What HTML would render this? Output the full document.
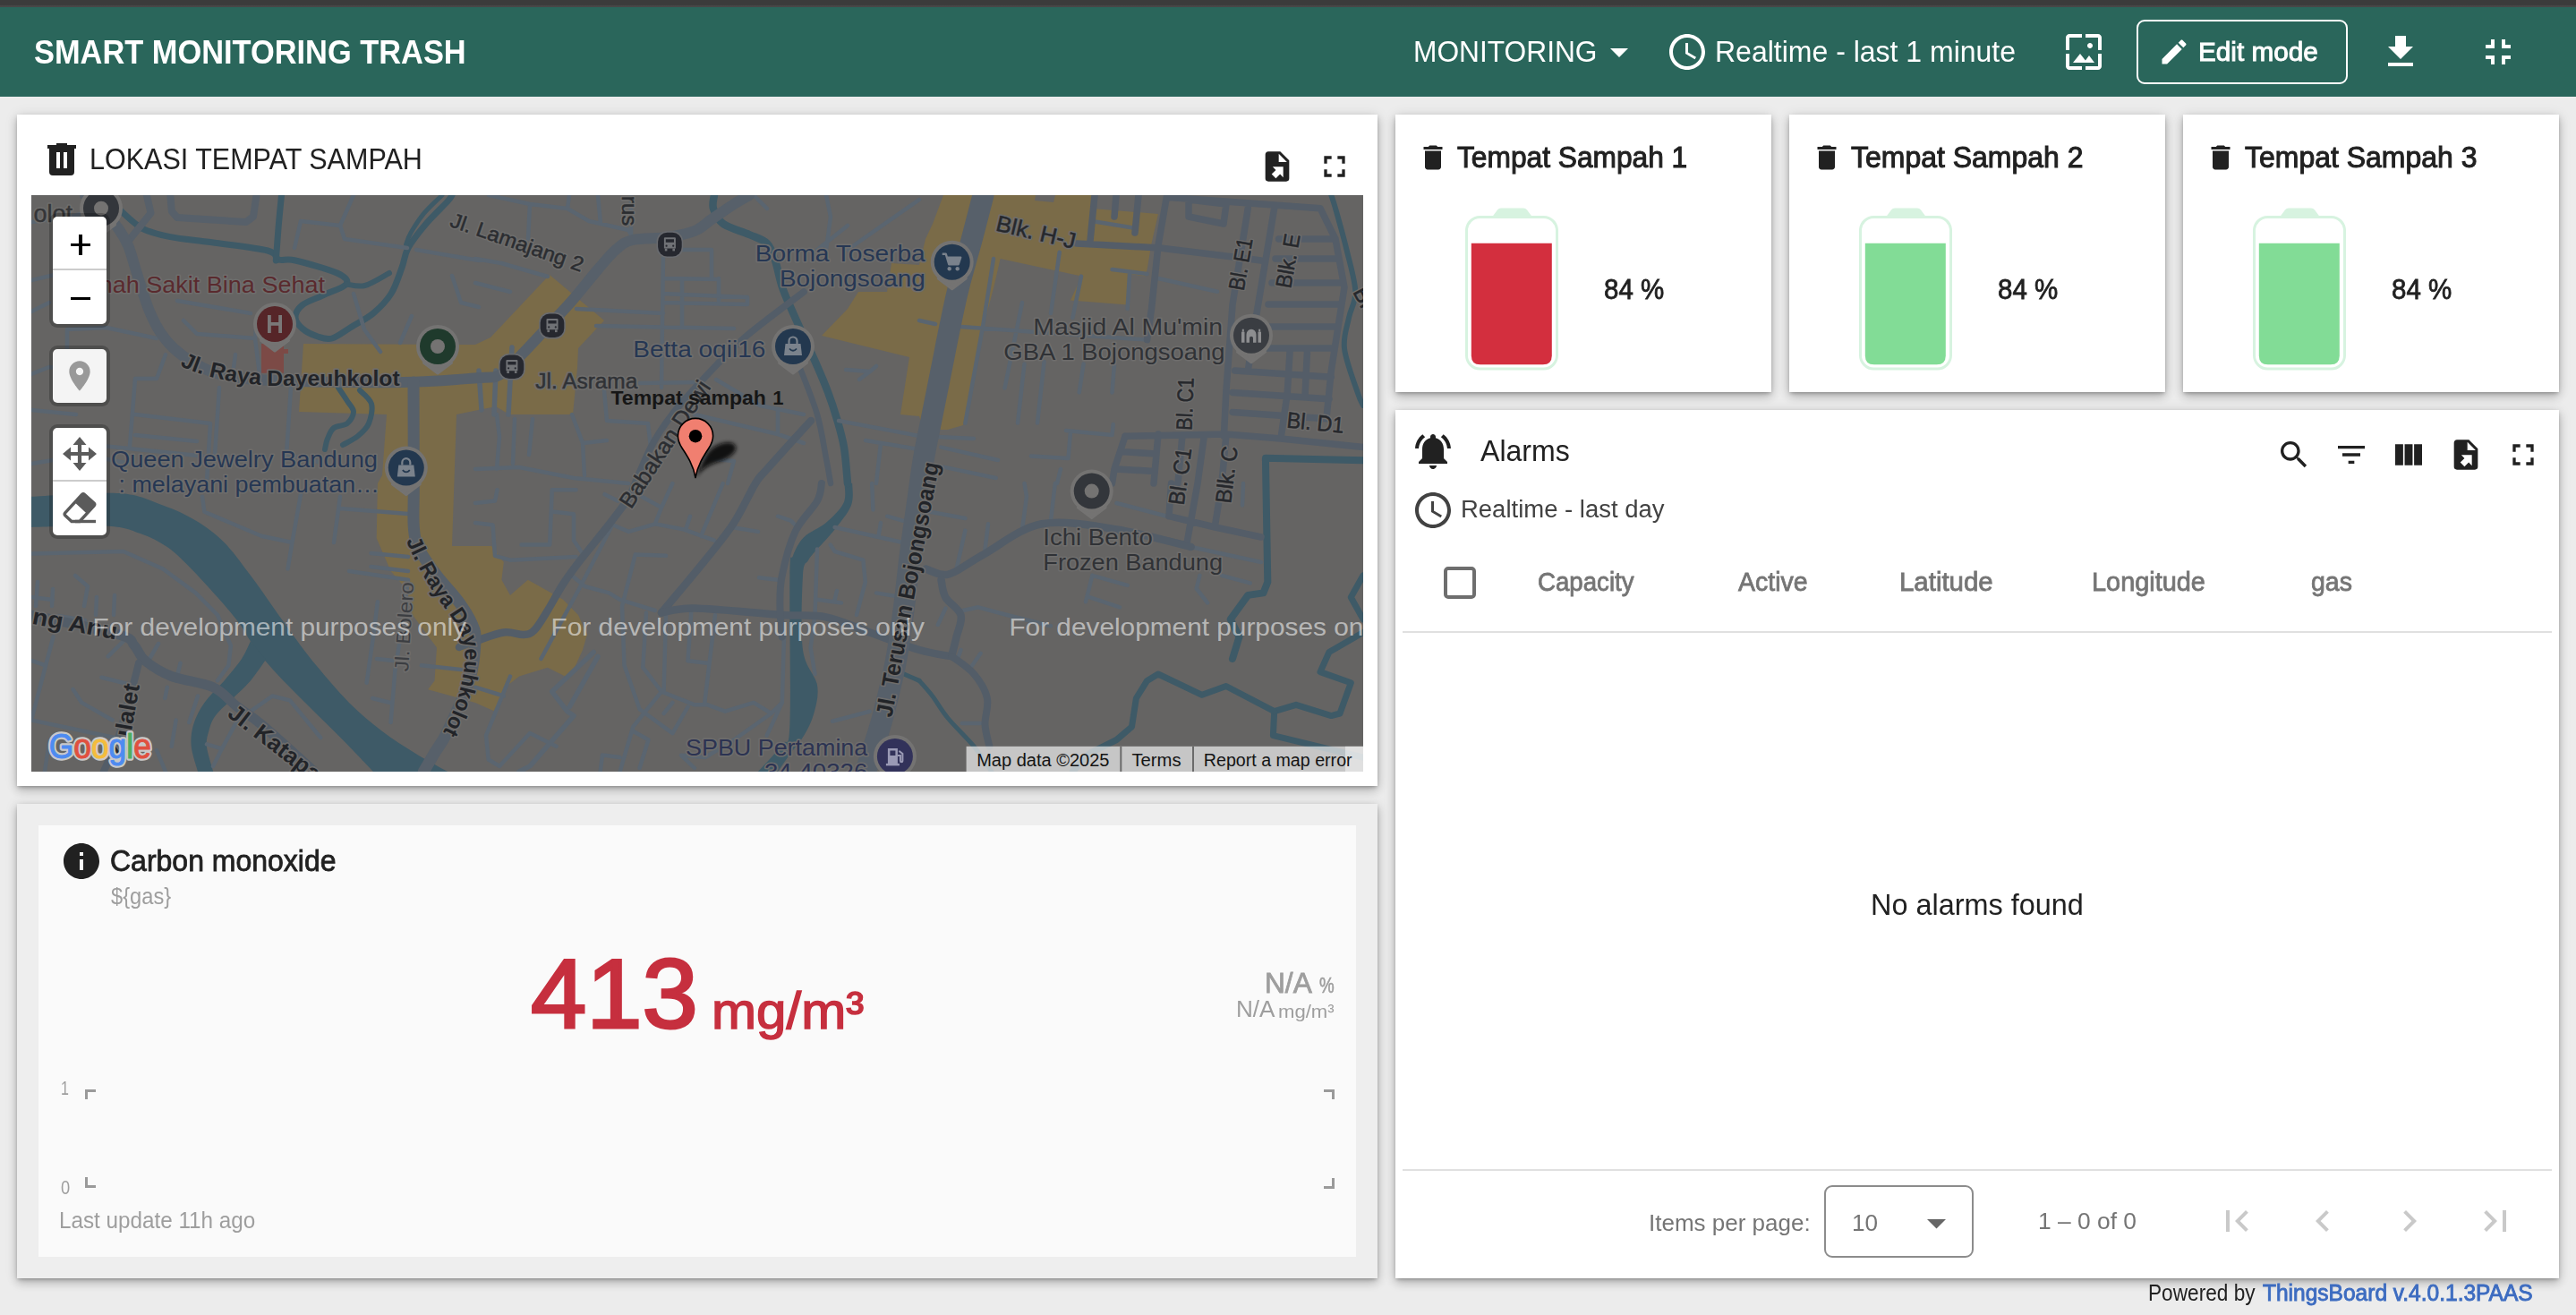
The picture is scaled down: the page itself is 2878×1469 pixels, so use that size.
<!DOCTYPE html><html lang="id"><head><meta charset="utf-8"><title>SMART MONITORING TRASH</title><style>
*{box-sizing:border-box;margin:0;padding:0}
html{background:#ececec}
body{width:2878px;height:1469px;overflow:hidden;position:relative;background:#ececec;font-family:'Liberation Sans',sans-serif;color:#212121}
.t{position:absolute;white-space:nowrap;line-height:1;transform-origin:0 0;display:block}
.i{position:absolute;display:block;overflow:visible}
.abs{position:absolute}
.card{position:absolute;background:#fff;box-shadow:0 2px 4px -1px rgba(0,0,0,.28),0 5px 10px rgba(0,0,0,.20),0 1px 14px rgba(0,0,0,.10)}
header{position:absolute;left:0;top:8px;width:2878px;height:100px;background:#2a665b}
a{text-decoration:none}
</style></head><body>
<div class="abs" style="left:0;top:0;width:2878px;height:8px;background:linear-gradient(#3b3b3b 0,#3b3b3b 5.4px,#474747 6.2px,#474747 8px)"></div>
<header>
<h1 class="t" style="left:38.48px;top:32.33px;font-size:37.4px;color:#fff;font-weight:700;transform:scaleX(0.9196);font-weight:700;">SMART MONITORING TRASH</h1>
<span class="t" style="left:1579.08px;top:33.06px;font-size:33px;color:#fff;transform:scaleX(0.9609);">MONITORING</span>
<svg class="i" style="left:1785.0px;top:26.0px" width="48" height="48" viewBox="0 0 24 24"><path fill="#fff" fill-rule="evenodd" d="M7 10l5 5 5-5z"/></svg>
<svg class="i" style="left:1860.5px;top:26.0px" width="48" height="48" viewBox="0 0 24 24"><path fill="#fff" fill-rule="evenodd" d="M11.99 2C6.47 2 2 6.48 2 12s4.47 10 9.99 10C17.52 22 22 17.52 22 12S17.52 2 11.99 2zM12 20c-4.42 0-8-3.58-8-8s3.58-8 8-8 8 3.58 8 8-3.58 8-8 8zm.5-13H11v6l5.25 3.15.75-1.23-4.5-2.67z"/></svg>
<span class="t" style="left:1916.06px;top:33.06px;font-size:33px;color:#fff;transform:scaleX(0.9695);">Realtime - last 1 minute</span>
<svg class="i" style="left:2303.5px;top:26.0px" width="48" height="48" viewBox="0 0 24 24"><path fill="#fff" fill-rule="evenodd" d="M4 4h7V2H4c-1.1 0-2 .9-2 2v7h2V4zm6 9l-4 5h12l-3-4-2.03 2.71L10 13zm7-4.5c0-.83-.67-1.5-1.5-1.5S14 7.67 14 8.5s.67 1.5 1.5 1.5S17 9.33 17 8.5zM20 2h-7v2h7v7h2V4c0-1.1-.9-2-2-2zm0 18h-7v2h7c1.1 0 2-.9 2-2v-7h-2v7zM4 13H2v7c0 1.1.9 2 2 2h7v-2H4v-7z"/></svg>
<div class="abs" style="left:2387px;top:14px;width:236px;height:72px;border:2px solid #fff;border-radius:9px"></div>
<svg class="i" style="left:2411.0px;top:32.0px" width="36" height="36" viewBox="0 0 24 24"><path fill="#fff" fill-rule="evenodd" d="M3 17.25V21h3.75L17.81 9.94l-3.75-3.75L3 17.25zM20.71 7.04c.39-.39.39-1.02 0-1.41l-2.34-2.34c-.39-.39-1.02-.39-1.41 0l-1.83 1.83 3.75 3.75 1.83-1.83z"/></svg>
<span class="t" style="left:2456.41px;top:35.95px;font-size:29px;color:#fff;-webkit-text-stroke:0.9px #fff;transform:scaleX(1.0254);">Edit mode</span>
<svg class="i" style="left:2658.0px;top:26.0px" width="48" height="48" viewBox="0 0 24 24"><path fill="#fff" fill-rule="evenodd" d="M19 9h-4V3H9v6H5l7 7 7-7zM5 18v2h14v-2H5z"/></svg>
<svg class="i" style="left:2767.0px;top:26.0px" width="48" height="48" viewBox="0 0 24 24"><path fill="#fff" fill-rule="evenodd" d="M5 16h3v3h2v-5H5v2zm3-8H5v2h5V5H8v3zm6 11h2v-3h3v-2h-5v5zm2-11V5h-2v5h5V8h-3z"/></svg>
</header>
<section class="card" style="left:19px;top:128px;width:1520px;height:750px">
<svg class="i" style="left:26.0px;top:26.0px" width="48" height="48" viewBox="0 0 24 24"><path fill="#212121" fill-rule="evenodd" d="M9,3V4H4V6H5V19A2,2 0 0,0 7,21H17A2,2 0 0,0 19,19V6H20V4H15V3H9M9,8H11V17H9V8M13,8H15V17H13V8Z"/></svg>
<h2 class="t" style="left:81.45px;top:33.06px;font-size:33px;color:#212121;transform:scaleX(0.9245);font-weight:400;">LOKASI TEMPAT SAMPAH</h2>
<svg class="i" style="left:1388.0px;top:38.0px" width="40" height="40" viewBox="0 0 24 24"><path fill="#212121" fill-rule="evenodd" d="M6,2C4.89,2 4,2.9 4,4V20A2,2 0 0,0 6,22H18A2,2 0 0,0 20,20V8L14,2M13,3.5L18.5,9H13M8.93,12.22H16V19.29L13.88,17.17L11.05,20L8.22,17.17L11.05,14.35Z"/></svg>
<svg class="i" style="left:1451.7px;top:38.0px" width="40" height="40" viewBox="0 0 24 24"><path fill="#212121" fill-rule="evenodd" d="M7 14H5v5h5v-2H7v-3zm-2-4h2V7h3V5H5v5zm12 7h-3v2h5v-5h-2v3zM14 5v2h3v3h2V5h-5z"/></svg>
<div class="abs" id="map" style="left:16px;top:90px;width:1488px;height:644px;overflow:hidden;background:#656463">
<svg class="i" style="left:0;top:0" width="1488" height="644" viewBox="0 0 1488 644" font-family="'Liberation Sans', sans-serif">
<rect width="1488" height="644" fill="#656463"/>
<g fill="#7a6b48">
<path d="M304.0 166.0 L496.0 167.0 L513.0 159.0 L579.0 89.0 L640.0 140.0 L611.0 171.0 L610.0 193.0 L605.0 245.0 L534.0 245.0 L519.0 236.0 L475.0 245.0 L470.0 392.0 L514.0 392.0 L527.8 410.0 L525.4 429.7 L535.0 446.9 L554.8 429.7 L594.0 451.8 L611.0 469.0 L620.9 491.0 L616.0 508.0 L601.3 540.0 L576.8 527.7 L545.0 537.5 L532.7 547.3 L518.0 576.7 L496.0 566.9 L443.2 552.2 L450.5 542.4 L453.0 505.6 L426.0 469.0 L416.3 437.0 L401.6 420.0 L385.7 383.2 L386.9 322.0 L392.0 313.0 L397.0 245.0 L299.0 242.0Z"/>
<path d="M1019.0 0.0 L1007.0 32.0 L999.0 49.0 L992.0 78.0 L961.0 76.0 L956.0 108.0 L924.0 108.0 L912.0 127.0 L883.0 157.0 L981.0 181.0 L971.0 245.0 L992.0 247.0 L997.0 262.0 L1010.0 262.0 L1064.0 0.0Z"/>
<path d="M1064.0 0.0 L1185.4 0.0 L1185.4 15.0 L1259.0 21.0 L1251.5 54.0 L1246.6 83.0 L1244.2 90.6 L1227.0 88.0 L1224.6 122.4 L1161.0 117.5 L1173.2 90.6 L1151.2 85.7 L1082.6 71.0 L1075.3 102.8 L1065.5 139.6 L1053.2 196.0 L1041.0 257.0 L1023.8 262.0 L1010.0 262.0Z"/>
</g>
<g fill="#656463">
<path d="M1122 0 L1144 0 L1142 8 L1121 6Z"/>
</g>
<path d="M0.0 336.7 C16.3 336.1 73.5 331.4 98.0 333.0 C122.5 334.6 132.7 341.4 147.0 346.5 C161.3 351.6 172.2 356.7 183.6 363.6 C195.0 370.5 205.3 377.8 215.5 388.0 C225.7 398.2 235.9 413.0 244.9 424.8 C253.9 436.6 261.2 447.6 269.3 459.0 C277.4 470.4 285.6 482.4 293.8 493.4 C302.0 504.4 308.1 513.0 318.3 525.2 C328.5 537.5 342.8 554.6 355.0 566.9 C367.2 579.1 379.6 589.3 391.8 598.7 C404.1 608.1 416.3 615.7 428.5 623.2 C440.7 630.8 459.1 640.5 465.2 644.0 L382.0 644.0 C377.5 639.3 363.6 624.6 355.0 615.8 C346.4 607.0 338.8 599.4 330.6 591.3 C322.4 583.1 314.2 575.0 306.0 566.9 C297.8 558.8 289.4 550.6 281.6 542.4 C273.9 534.2 265.6 525.2 259.5 517.9 C253.4 510.5 249.4 504.8 244.9 498.3 C240.4 491.8 238.7 486.9 232.6 478.7 C226.5 470.5 217.5 459.9 208.1 449.3 C198.7 438.7 185.7 424.4 176.3 415.0 C166.9 405.6 160.8 399.1 151.8 393.0 C142.8 386.9 133.4 382.2 122.4 378.3 C111.4 374.4 106.1 370.9 85.7 369.7 C65.3 368.5 14.3 370.8 0.0 371.0Z" fill="#3e5a67"/>
<path d="M244.9 498.3 C243.2 501.6 239.9 510.5 235.0 517.9 C230.1 525.2 222.4 534.2 215.5 542.4 C208.6 550.6 199.1 558.8 193.4 566.9 C187.7 575.0 183.6 583.1 181.2 591.3 C178.8 599.4 177.9 607.0 178.7 615.8 C179.5 624.6 184.8 639.3 186.0 644.0 L203.2 644.0 C202.0 639.3 196.7 623.3 195.9 615.8 C195.1 608.2 196.7 604.4 198.3 598.7 C199.9 593.0 201.2 587.6 205.7 581.5 C210.2 575.4 218.8 568.5 225.3 562.0 C231.8 555.5 238.8 549.6 244.9 542.4 C251.0 535.2 259.1 522.9 262.0 519.0Z" fill="#3e5a67"/>
<path d="M908.6 322.0 C908.4 325.7 910.9 336.7 907.4 344.0 C903.9 351.3 895.1 359.7 887.8 366.0 C880.4 372.3 869.4 375.9 863.3 382.0 C857.2 388.1 853.6 395.7 851.0 402.8 C848.4 409.9 848.0 393.4 847.4 424.8 C846.8 456.2 848.8 559.9 847.4 591.3 C846.0 622.7 844.7 604.6 838.8 613.4 C832.9 622.2 816.4 638.9 811.9 644.0 L833.9 644.0 C836.4 640.5 843.7 629.9 848.6 623.2 C853.5 616.5 859.0 611.0 863.3 603.6 C867.6 596.2 871.8 588.4 874.3 579.0 C876.8 569.6 880.0 559.1 878.0 547.3 C876.0 535.5 864.7 528.4 862.0 508.0 C859.3 487.6 861.0 441.5 862.0 424.8 C863.0 408.1 865.5 412.6 868.2 407.7 C870.9 402.8 873.1 401.2 878.0 395.5 C882.9 389.8 891.3 381.6 897.6 373.4 C903.9 365.2 912.7 355.1 916.0 346.5 C919.3 337.9 917.0 326.1 917.2 322.0Z" fill="#3e5a67"/>
<path d="M99.4 17.0 C103.5 20.4 114.9 32.4 124.2 37.3 C133.5 42.2 142.4 44.0 155.3 46.6 C168.2 49.2 183.8 50.2 201.9 52.8 C220.0 55.4 251.6 58.8 264.0 62.0 C276.4 65.2 271.2 70.2 276.4 72.0 C281.6 73.8 284.1 70.5 295.0 73.0 C305.9 75.5 332.1 82.6 341.6 87.0 C351.1 91.4 354.6 95.3 352.0 99.4 C349.4 103.5 334.2 107.9 326.0 111.8 C317.8 115.7 308.0 118.6 302.8 122.7 C297.6 126.8 295.0 132.2 295.0 136.6 C295.0 141.0 298.6 145.4 302.8 149.0 C307.0 152.6 314.5 156.2 320.0 158.0 C325.5 159.8 329.7 161.8 336.0 160.0 C342.3 158.2 350.3 151.7 358.0 147.0 C365.7 142.3 374.7 138.2 382.0 132.0 C389.3 125.8 396.7 118.5 402.0 110.0 C407.3 101.5 410.8 89.5 414.0 81.0 C417.2 72.5 416.5 67.2 421.0 59.0 C425.5 50.8 433.7 40.7 441.0 32.0 C448.3 23.3 460.2 12.3 465.0 7.0 C469.8 1.7 469.2 1.2 470.0 0.0" fill="none" stroke="#3e5a67" stroke-width="7" stroke-linecap="round" stroke-linejoin="round"/>
<path d="M400.0 87.0 C395.4 89.3 380.7 98.9 372.7 101.0 C364.7 103.1 355.4 99.7 352.0 99.4" fill="none" stroke="#3e5a67" stroke-width="6" stroke-linecap="round" stroke-linejoin="round"/>
<path d="M459.0 0.0 C455.6 3.4 444.6 13.2 438.8 20.2 C433.0 27.2 427.4 36.2 424.0 42.0 C420.6 47.8 419.5 52.8 418.6 55.0" fill="none" stroke="#3e5a67" stroke-width="5" stroke-linecap="round" stroke-linejoin="round"/>
<path d="M279.5 0.0 C278.9 6.2 277.0 24.8 276.0 37.0 C275.0 49.2 273.8 67.0 273.3 73.0" fill="none" stroke="#3e5a67" stroke-width="7" stroke-linecap="round" stroke-linejoin="round"/>
<path d="M343.0 215.0 C344.7 217.5 350.2 225.5 353.0 230.0 C355.8 234.5 360.0 237.8 360.0 242.0 C360.0 246.2 356.7 252.0 353.0 255.0 C349.3 258.0 341.7 257.2 338.0 260.0 C334.3 262.8 332.7 268.0 331.0 272.0 C329.3 276.0 328.5 282.0 328.0 284.0" fill="none" stroke="#3e5a67" stroke-width="6" stroke-linecap="round" stroke-linejoin="round"/>
<path d="M367.0 218.0 C369.2 220.5 378.3 226.8 380.0 233.0 C381.7 239.2 379.5 249.0 377.0 255.0 C374.5 261.0 369.8 265.0 365.0 269.0 C360.2 273.0 350.8 277.3 348.0 279.0" fill="none" stroke="#3e5a67" stroke-width="6" stroke-linecap="round" stroke-linejoin="round"/>
<path d="M763.0 0.0 C762.8 2.5 760.3 9.7 762.0 15.0 C763.7 20.3 766.3 27.2 773.0 32.0 C779.7 36.8 793.8 40.3 802.0 44.0 C810.2 47.7 817.2 49.2 822.0 54.0 C826.8 58.8 828.2 64.8 831.0 73.0 C833.8 81.2 836.0 94.0 839.0 103.0 C842.0 112.0 845.8 119.7 849.0 127.0 C852.2 134.3 853.2 136.3 858.0 147.0 C862.8 157.7 872.7 178.8 878.0 191.0 C883.3 203.2 886.3 210.2 890.0 220.0 C893.7 229.8 897.0 239.7 900.0 250.0 C903.0 260.3 906.0 270.0 908.0 282.0 C910.0 294.0 911.3 315.3 912.0 322.0" fill="none" stroke="#3e5a67" stroke-width="8.5" stroke-linecap="round" stroke-linejoin="round"/>
<path d="M1452.3 0.0 C1453.1 2.4 1454.1 4.5 1457.0 14.7 C1459.9 24.9 1465.8 45.5 1469.5 61.0 C1473.2 76.5 1478.9 95.0 1479.3 107.7 C1479.7 120.4 1474.0 126.4 1472.0 137.0 C1470.0 147.6 1465.4 157.5 1467.0 171.4 C1468.6 185.3 1478.2 209.8 1481.7 220.4 C1485.2 231.0 1487.0 232.6 1488.0 235.0" fill="none" stroke="#3e5a67" stroke-width="6" stroke-linecap="round" stroke-linejoin="round"/>
<path d="M1488.0 296.3 L1378.9 293.8 L1381.3 432.2 L1376.4 444.4 L1359.3 446.9 L1339.7 473.8 L1349.5 493.4 L1342.0 517.9" fill="none" stroke="#3e5a67" stroke-width="8" stroke-linecap="round" stroke-linejoin="round"/>
<path d="M1488.0 424.8 L1474.3 449.3 L1488.0 473.8" fill="none" stroke="#3e5a67" stroke-width="7" stroke-linecap="round" stroke-linejoin="round"/>
<path d="M1488.0 488.5 L1449.9 510.5 L1440.0 532.6 L1474.3 544.8 L1462.0 579.0 L1452.3 581.6 L1413.0 569.3 L1388.7 576.7 L1387.4 603.6 L1488.0 628.0" fill="none" stroke="#3e5a67" stroke-width="7" stroke-linecap="round" stroke-linejoin="round"/>
<path d="M1388.7 576.7 L1334.8 548.5 L1307.9 558.3 L1258.9 535.0 L1246.6 542.4 L1234.4 562.0 L1229.5 593.8 L1212.4 608.5 L1183.0 623.2 L1163.4 644.0" fill="none" stroke="#3e5a67" stroke-width="7" stroke-linecap="round" stroke-linejoin="round"/>
<path d="M992.0 542.4 C994.5 545.2 1001.4 552.6 1006.7 559.5 C1012.0 566.4 1016.0 574.6 1023.8 584.0 C1031.5 593.4 1045.0 605.8 1053.2 615.8 C1061.4 625.8 1069.5 639.3 1072.8 644.0" fill="none" stroke="#3e5a67" stroke-width="5" stroke-linecap="round" stroke-linejoin="round"/>
<path d="M975.0 535.0 L992.0 542.4" fill="none" stroke="#3e5a67" stroke-width="5" stroke-linecap="round" stroke-linejoin="round"/>
<path d="M0.0 30.0 L40.0 25.0 L78.0 15.0 M301.0 29.0 L294.0 59.0 M301.0 29.0 L345.0 34.0 L350.0 49.0 L420.0 59.0 M345.0 34.0 L360.0 0.0 M430.0 61.0 L500.0 73.0 M0.0 95.0 L30.0 88.0 L60.0 100.0 M0.0 130.0 L20.0 120.0 M163.0 118.0 L245.0 132.0 M170.0 140.0 L185.0 155.0 L250.0 160.0 L255.0 200.0 M250.0 160.0 L252.0 140.0 M360.0 110.0 L372.0 150.0 L390.0 175.0 M425.0 135.0 L412.0 165.0 M470.0 90.0 L480.0 120.0 L500.0 125.0 M0.0 200.0 L20.0 192.0 L40.0 195.0 L40.0 150.0 L84.0 148.0 L140.0 160.0 M116.0 205.0 L110.0 280.0 M150.0 178.0 L140.0 205.0 L116.0 205.0 M116.0 245.0 L200.0 255.0 L196.0 320.0 M116.0 268.0 L185.0 275.0 M60.0 278.0 L196.0 292.0 M210.0 215.0 L205.0 290.0 M228.0 178.0 L225.0 200.0 M290.0 215.0 L285.0 290.0 L330.0 300.0 M0.0 240.0 L50.0 245.0 M0.0 300.0 L60.0 290.0 L110.0 300.0 M511.0 0.0 L557.0 10.0 L599.0 15.0 L623.0 29.0 L667.0 39.0 L672.0 47.0 M557.0 10.0 L555.0 49.0 M601.0 0.0 L599.0 15.0 M633.0 0.0 L636.0 32.0 M496.0 71.0 L525.0 76.0 L577.0 91.0 M496.0 98.0 L535.0 108.0 M670.0 0.0 L670.0 47.0 M706.0 64.0 L704.0 215.0 M727.0 95.0 L727.0 147.0 M760.0 61.0 L760.0 93.0 M768.0 93.0 L768.0 118.0 M706.0 61.0 L760.0 61.0 M706.0 93.0 L768.0 94.0 M706.0 110.0 L800.0 114.0 L800.0 122.0 L706.0 120.0 M609.0 127.0 L706.0 132.0 M631.0 146.0 L785.0 149.0 M680.0 210.0 L741.0 209.0 M520.0 245.0 L523.0 270.0 L520.0 306.0 M496.0 306.0 L545.0 304.0 L606.0 316.0 L667.0 322.0 M604.0 245.0 L616.0 277.0 L618.0 313.0 M616.0 277.0 L643.0 274.0 M640.0 218.0 L643.0 252.0 L689.0 255.0 L692.0 282.0 M765.0 206.0 L814.0 235.0 L863.0 245.0 M741.0 245.0 L834.0 267.0 L863.0 277.0 M834.0 240.0 L834.0 267.0 M753.0 294.0 L785.0 297.0 L778.0 322.0 M902.0 252.0 L992.0 269.0 M932.0 274.0 L992.0 284.0 M949.0 277.0 L944.0 322.0 M807.0 0.0 L822.0 15.0 M888.0 0.0 L893.0 24.0 L888.0 61.0 M912.0 34.0 L878.0 61.0 M992.0 5.0 L912.0 61.0 M910.0 195.0 L937.0 197.0 L944.0 191.0 M925.0 206.0 L937.0 197.0 M540.0 250.0 L538.0 300.0 M560.0 250.0 L556.0 290.0 M1075.0 71.0 L1063.0 147.0 L1043.4 254.6 M1148.7 63.7 L1139.0 132.0 M1173.0 90.6 L1163.4 137.0 M1107.0 120.0 L1087.5 215.5 M1109.5 188.5 L1102.0 254.6 M1131.6 186.0 L1124.0 254.6 M1175.6 188.5 L1170.7 220.4 M1210.0 188.5 L1207.5 220.4 M1038.5 147.0 L1246.6 161.6 M1259.0 93.0 L1325.0 107.7 M1207.5 83.0 L1246.6 88.0 M1227.0 88.0 L1224.6 127.0 M1156.0 263.0 L1207.5 268.0 L1208.7 256.0 M1161.0 264.4 L1158.5 294.0 L1116.9 291.4 M1150.0 306.0 L1146.0 322.0 M1016.5 281.6 L1080.0 296.0 M992.0 269.0 L1053.0 272.0 M1019.0 303.6 L1077.7 316.0 M1185.0 29.0 L1234.0 37.0 M992.0 140.0 L1010.0 144.0 M0.0 400.4 L102.8 398.0 L147.0 417.5 L183.6 444.4 L208.0 469.0 L222.8 503.2 L220.4 525.2 L208.0 542.4 M301.0 334.2 L291.4 388.0 L286.5 417.5 M191.0 336.7 L193.4 353.8 L257.0 380.8 L291.4 388.0 M345.0 336.7 L338.0 388.0 M345.0 350.0 L421.0 356.0 M379.5 400.0 L421.0 404.0 M379.5 415.0 L421.0 420.0 M355.0 420.0 L421.0 429.7 M386.9 454.2 L382.0 493.4 L374.6 544.8 M401.6 589.0 L406.5 530.0 L416.3 469.0 L421.0 429.7 M386.0 518.0 L404.0 520.0 M381.0 562.0 L401.0 567.0 M435.8 525.2 L480.0 530.0 M7.0 432.0 L5.0 459.0 M24.0 440.0 L23.0 459.0 M49.0 425.0 L63.0 437.0 L59.0 459.0 M73.0 449.0 L72.0 469.0 M93.0 447.0 L92.0 469.0 M0.0 449.0 L24.0 452.0 M30.0 470.0 L60.0 475.0 M24.5 493.4 L0.0 586.5 M0.0 586.5 L93.0 606.0 M46.5 552.0 L56.3 566.9 L90.6 586.5 M78.4 538.7 L112.6 547.3 M85.7 515.4 L102.8 498.3 M132.0 518.0 L142.0 501.0 M166.5 522.8 L161.6 542.4 M151.8 549.7 L149.3 562.0 M186.0 559.5 L176.3 589.0 M161.6 586.5 L156.7 615.8 M244.9 576.7 L269.3 559.5 L288.9 564.4 L323.2 606.0 M196.0 613.4 L213.0 618.3 L227.7 591.3 L244.9 576.7 M203.0 638.0 L213.0 618.3 M0.0 520.0 L15.0 525.0 M20.0 610.0 L15.0 644.0 M140.0 620.0 L150.0 644.0 M496.0 366.0 L515.6 368.5 L518.0 402.8 L535.0 407.7 L608.6 404.0 M496.0 344.0 L518.0 341.6 L520.5 329.3 M581.7 329.3 L608.6 329.3 M581.7 329.3 L579.2 390.6 L547.4 390.6 M584.0 353.8 L606.0 356.3 L606.0 385.7 L616.0 400.4 M650.0 368.5 L667.4 375.9 L696.8 367.3 L728.6 373.4 L762.9 385.7 M640.5 334.2 L655.0 341.6 M682.0 336.7 L704.0 349.0 L696.8 367.3 M704.0 349.0 L716.4 322.0 M772.7 322.0 L748.2 380.8 M736.0 358.7 L731.0 374.0 M782.5 371.0 L811.9 375.9 M674.7 401.6 L709.0 402.8 M674.7 401.6 L660.0 459.0 L662.5 525.2 L679.6 574.2 L716.4 601.1 L733.5 571.7 M603.7 424.8 L618.4 437.0 L645.4 444.4 L657.6 451.8 L696.8 464.0 M687.0 466.5 L683.3 527.7 L704.0 554.6 L740.9 569.3 L755.5 569.3 L775.1 576.7 L807.0 566.9 L826.6 579.0 L838.8 566.9 M709.0 469.0 L706.6 554.6 M737.2 466.5 L733.5 520.3 L755.5 522.8 M764.0 469.0 L752.0 569.3 M704.0 554.6 L672.3 593.8 L657.6 644.0 M672.3 598.7 L689.4 608.5 L679.6 640.0 M638.0 625.6 L657.6 628.0 M638.0 625.6 L635.6 644.0 M706.6 579.0 L716.4 566.9 M826.6 579.0 L785.0 608.5 L753.0 628.0 L726.0 625.7 L740.9 640.0 M535.0 537.5 L508.0 603.6 L510.7 630.5 L523.0 637.9 L557.0 601.0 L586.6 615.8 M496.0 549.7 L527.8 559.5 M813.0 427.3 L834.0 429.7 M834.0 358.7 L848.6 363.6 L856.0 371.0 M897.6 371.0 L973.5 388.0 M892.7 390.6 L897.6 398.0 L929.4 407.7 L931.8 432.2 L922.0 469.0 M878.0 451.8 L905.0 455.4 M900.0 442.0 L897.6 451.8 M878.0 395.5 L875.5 469.0 L870.6 505.6 L875.5 535.0 M944.0 444.4 L973.5 449.3 M939.2 322.0 L940.4 351.4 M956.3 358.7 L973.5 363.6 M949.0 366.0 L946.5 380.8 M895.0 587.7 L936.7 576.7 M841.0 493.4 L838.8 566.9 L821.7 603.6 M569.5 517.9 L613.5 437.0 L647.8 371.0 M1109.5 322.0 L1112.0 336.7 L1107.0 373.4 M1143.8 322.0 L1139.0 363.6 M1004.0 353.8 L1043.4 361.0 M1043.4 374.6 L1033.6 417.5 M1069.0 367.3 L1065.5 395.5 M1185.4 424.8 L1224.6 435.9 M1185.4 424.8 L1178.0 454.2 M1183.0 449.3 L1216.0 460.3 M1305.4 424.8 L1301.7 439.5 L1314.0 455.4 M1041.0 464.0 L1058.0 460.3 L1090.0 469.0 L1139.0 481.2 M1021.4 461.6 L1012.8 480.0 M1038.5 508.0 L1034.8 517.9 M1060.6 511.8 L1049.5 527.7 M1039.7 590.0 L1060.6 590.0 M1212.4 344.0 L1268.7 358.7 M1354.0 322.0 L1353.0 346.5 M1330.0 424.8 L1361.7 433.4 M1295.6 393.0 L1374.0 410.0" fill="none" stroke="#5a6570" stroke-width="4.5" stroke-linecap="round" stroke-linejoin="round"/>
<path d="M155.3 0.0 L156.8 18.0 L163.0 25.0 L240.0 30.0 L248.0 24.0 L251.5 0.0 M128.9 0.0 L133.5 20.0 L108.7 51.0" fill="none" stroke="#57606a" stroke-width="8" stroke-linecap="round" stroke-linejoin="round"/>
<path d="M628.2 510.5 L581.7 554.6 L598.8 576.7 L606.0 581.6 L557.0 637.9 L545.0 644.0 M633.0 515.4 L601.3 571.7 M537.0 170.0 L533.0 245.0 M519.0 196.0 L517.0 245.0 M500.0 196.0 L503.0 240.0" fill="none" stroke="#5a6570" stroke-width="5.5" stroke-linecap="round" stroke-linejoin="round"/>
<path d="M1168.0 54.0 L1261.0 59.0 L1359.0 71.0 L1374.0 73.0 M1268.7 0.0 L1259.0 56.0 L1251.5 127.0 L1246.6 161.6 M1188.0 0.0 L1183.0 51.0 M1237.0 0.0 L1233.0 42.0 M1212.0 0.0 L1210.0 24.0 M1293.0 5.0 L1335.0 10.0 L1332.0 32.0 L1293.0 24.0 L1293.0 5.0 M1271.0 2.4 L1440.0 14.7 L1457.0 49.0 L1467.0 103.0 L1452.3 196.0 L1447.4 245.0 M1359.3 14.7 L1342.0 122.4 L1334.8 220.4 L1332.4 269.3 M1388.7 14.7 L1369.0 132.2 L1359.3 196.0 M1393.6 49.0 L1457.0 49.0 M1390.0 71.0 L1460.0 71.0 M1386.0 98.0 L1466.0 98.0 M1382.0 122.0 L1464.0 122.0 M1378.0 147.0 L1460.0 147.0 M1374.0 171.0 L1456.0 171.0 M1344.6 196.0 L1452.3 203.2 M1342.0 220.4 L1450.0 227.7 M1342.0 242.4 L1447.4 249.7 M1406.0 176.0 L1403.0 225.0 M1425.4 176.0 L1423.0 225.0 M1334.8 267.0 L1396.0 272.0 L1488.0 281.6 M1396.0 272.0 L1403.4 220.4 M1222.0 269.3 L1334.8 267.0 M1259.0 267.0 L1254.0 322.0 M1286.0 268.0 L1281.0 322.0 M1310.3 269.3 L1303.0 322.0 M1334.8 269.3 L1330.0 322.0 M1217.3 286.5 L1256.4 289.0 M1212.4 306.0 L1254.0 308.5 M1222.0 269.3 L1210.0 306.0 L1207.5 322.0 M1273.6 322.0 L1271.0 358.7 M1303.0 322.0 L1290.7 390.6 M1330.0 322.0 L1322.6 368.5 M1271.0 358.7 L1322.6 371.0 L1374.0 382.0 M1256.4 383.2 L1290.7 390.6" fill="none" stroke="#545d68" stroke-width="7.5" stroke-linecap="round" stroke-linejoin="round"/>
<path d="M667.4 339.0 C663.3 344.3 652.0 359.6 643.0 371.0 C634.0 382.4 621.7 397.1 613.5 407.7 C605.3 418.3 600.1 425.2 594.0 434.6 C587.9 444.0 582.1 455.4 576.8 464.0 C571.5 472.6 566.5 481.5 562.0 486.0 C557.5 490.5 555.6 490.6 549.9 491.0 C544.2 491.4 536.8 487.3 527.8 488.5 C518.8 489.7 504.3 495.6 496.0 498.3 C487.7 501.1 481.0 503.9 478.0 505.0" fill="none" stroke="#535d68" stroke-width="8.5" stroke-linecap="round" stroke-linejoin="round"/>
<path d="M863.0 108.0 C852.0 116.5 815.3 143.2 797.0 159.0 C778.7 174.8 766.5 188.7 753.0 203.0 C739.5 217.3 726.2 231.8 716.0 245.0 C705.8 258.2 700.1 266.3 692.0 282.0 C683.9 297.7 671.5 329.5 667.4 339.0" fill="none" stroke="#535d68" stroke-width="7.5" stroke-linecap="round" stroke-linejoin="round"/>
<path d="M858.0 191.0 C861.3 200.0 873.0 227.8 878.0 245.0 C883.0 262.2 885.5 281.2 888.0 294.0 C890.5 306.8 892.2 317.3 893.0 322.0" fill="none" stroke="#535d68" stroke-width="6.5" stroke-linecap="round" stroke-linejoin="round"/>
<path d="M871.0 252.0 C862.8 261.0 832.3 294.3 822.0 306.0 C811.7 317.7 815.2 312.0 809.0 322.0 C802.8 332.0 794.3 351.7 785.0 366.0 C775.7 380.3 764.4 393.4 753.0 407.7 C741.6 422.0 724.6 442.0 716.4 451.8 C708.2 461.6 706.1 464.1 704.0 466.5" fill="none" stroke="#535d68" stroke-width="8.5" stroke-linecap="round" stroke-linejoin="round"/>
<path d="M704.0 466.5 C710.1 465.7 718.4 461.2 740.9 461.6 C763.4 462.0 814.3 467.4 838.8 469.0 C863.3 470.6 871.5 468.1 887.8 471.4 C904.1 474.6 919.3 482.4 936.7 488.5 C954.1 494.6 976.7 503.5 992.0 508.0 C1007.3 512.5 1022.6 514.2 1028.7 515.4" fill="none" stroke="#535d68" stroke-width="8.5" stroke-linecap="round" stroke-linejoin="round"/>
<path d="M882.9 322.0 C882.1 325.3 882.9 332.6 878.0 341.6 C873.1 350.6 860.0 362.0 853.5 375.9 C847.0 389.8 841.6 410.9 838.8 424.8 C835.9 438.7 836.4 447.6 836.4 459.0 C836.4 470.4 838.4 487.7 838.8 493.4" fill="none" stroke="#535d68" stroke-width="8" stroke-linecap="round" stroke-linejoin="round"/>
<path d="M999.3 417.5 C1002.2 418.5 1011.2 423.0 1016.5 423.6 C1021.8 424.2 1023.0 424.9 1031.2 421.0 C1039.4 417.1 1049.2 409.3 1065.5 400.4 C1081.8 391.4 1104.5 371.8 1129.0 367.3 C1153.5 362.8 1184.6 369.1 1212.4 373.4 C1240.2 377.7 1281.7 389.7 1295.6 393.0" fill="none" stroke="#535d68" stroke-width="8.5" stroke-linecap="round" stroke-linejoin="round"/>
<path d="M1016.5 429.7 C1017.3 433.0 1017.7 442.8 1021.4 449.3 C1025.1 455.9 1036.5 461.6 1038.5 469.0 C1040.5 476.4 1035.2 486.1 1033.6 493.4 C1032.0 500.7 1029.5 509.7 1028.7 513.0" fill="none" stroke="#535d68" stroke-width="8.5" stroke-linecap="round" stroke-linejoin="round"/>
<path d="M1028.7 515.4 C1032.8 518.7 1046.7 527.2 1053.2 535.0 C1059.7 542.8 1065.9 552.6 1067.9 562.0 C1070.0 571.4 1065.1 582.3 1065.5 591.3 C1065.9 600.3 1069.6 611.7 1070.4 615.8" fill="none" stroke="#535d68" stroke-width="8" stroke-linecap="round" stroke-linejoin="round"/>
<path d="M0.0 469.0 C16.3 472.7 78.8 485.3 98.0 491.0 C117.2 496.7 110.1 498.3 115.0 503.2 C119.9 508.1 120.3 514.6 127.3 520.3 C134.2 526.0 144.0 532.6 156.7 537.5 C169.3 542.4 190.9 544.0 203.2 549.7 C215.4 555.4 221.2 564.8 230.2 571.7 C239.2 578.6 242.7 579.2 257.0 591.3 C271.3 603.3 306.2 635.2 316.0 644.0" fill="none" stroke="#535d68" stroke-width="11" stroke-linecap="round" stroke-linejoin="round"/>
<path d="M120.0 522.8 C119.2 526.1 117.0 535.0 115.0 542.4 C113.0 549.8 110.5 556.7 107.7 566.9 C104.9 577.1 102.5 590.8 98.0 603.6 C93.5 616.5 83.7 637.3 80.8 644.0" fill="none" stroke="#535d68" stroke-width="8" stroke-linecap="round" stroke-linejoin="round"/>
<path d="M60.0 0.0 C63.5 3.0 74.8 11.8 81.0 18.0 C87.2 24.2 92.5 30.7 97.0 37.0 C101.5 43.3 104.8 48.7 108.0 56.0 C111.2 63.3 113.2 72.0 116.0 81.0 C118.8 90.0 122.2 101.5 125.0 110.0 C127.8 118.5 129.8 124.8 133.0 132.0 C136.2 139.2 139.7 146.5 144.0 153.0 C148.3 159.5 152.8 165.3 159.0 171.0 C165.2 176.7 172.3 182.2 181.0 187.0 C189.7 191.8 196.3 196.7 211.0 200.0 C225.7 203.3 234.8 205.5 269.0 207.0 C303.2 208.5 377.5 209.5 416.0 209.0 C454.5 208.5 482.2 205.3 500.0 204.0 C517.8 202.7 515.5 204.8 523.0 201.0 C530.5 197.2 536.0 190.0 545.0 181.0 C554.0 172.0 567.2 157.5 577.0 147.0 C586.8 136.5 594.7 128.7 604.0 118.0 C613.3 107.3 624.8 92.5 633.0 83.0 C641.2 73.5 646.5 66.5 653.0 61.0 C659.5 55.5 662.3 52.3 672.0 50.0 C681.7 47.7 699.5 48.7 711.0 47.0 C722.5 45.3 732.8 43.3 741.0 40.0 C749.2 36.7 752.7 32.0 760.0 27.0 C767.3 22.0 778.0 14.5 785.0 10.0 C792.0 5.5 799.2 1.7 802.0 0.0" fill="none" stroke="#57606a" stroke-width="12" stroke-linecap="round" stroke-linejoin="round"/>
<path d="M427.0 209.0 C427.1 227.8 427.2 295.0 427.3 322.0 C427.4 349.0 426.3 358.8 427.3 371.0 C428.3 383.2 429.1 386.5 433.4 395.5 C437.7 404.5 445.6 415.0 453.0 424.8 C460.4 434.6 471.0 445.2 477.5 454.2 C484.0 463.2 489.1 471.4 492.2 478.7 C495.3 486.0 496.4 487.8 496.0 498.0 C495.6 508.2 495.1 523.2 490.0 540.0 C484.9 556.8 471.8 584.8 465.2 598.7 C458.6 612.6 455.0 615.7 450.5 623.2 C446.0 630.8 440.3 640.5 438.3 644.0" fill="none" stroke="#57606a" stroke-width="13" stroke-linecap="round" stroke-linejoin="round"/>
<path d="M1063.5 0.0 C1061.4 8.2 1055.4 31.8 1050.8 49.0 C1046.2 66.2 1040.1 86.7 1036.0 103.0 C1031.9 119.3 1029.5 131.5 1026.3 147.0 C1023.0 162.5 1019.8 179.7 1016.5 196.0 C1013.2 212.3 1010.0 228.7 1006.7 245.0 C1003.5 261.3 999.8 277.7 997.0 294.0 C994.2 310.3 992.5 325.3 990.0 343.0 C987.5 360.7 984.5 380.5 982.0 400.0 C979.5 419.5 977.7 440.0 975.0 460.0 C972.3 480.0 969.8 500.0 966.0 520.0 C962.2 540.0 956.3 563.3 952.0 580.0 C947.7 596.7 943.3 609.3 940.0 620.0 C936.7 630.7 933.3 640.0 932.0 644.0" fill="none" stroke="#57606a" stroke-width="24" stroke-linecap="round" stroke-linejoin="round"/>
<path d="M257 166 H282 V172 H287 V177 H282 V198.700 H257Z" fill="#7c4a46"/>
<g transform="translate(78.0 14.7)"><path d="M-15.500 18.300 L0 30 L15.500 18.300Z" fill="#747372" stroke="#747372" stroke-width="3" stroke-linejoin="round"/><circle r="24" fill="#747372"/><circle r="20" fill="#33363b"/><circle r="8" fill="#747372"/></g>
<g transform="translate(272.0 144.0)"><path d="M-15.500 18.300 L0 30 L15.500 18.300Z" fill="#747372" stroke="#747372" stroke-width="3" stroke-linejoin="round"/><circle r="24" fill="#747372"/><circle r="20" fill="#562528"/><path d="M-8 -10 H-4.200 V-2 H4.200 V-10 H8 V10 H4.200 V1.800 H-4.200 V10 H-8Z" fill="#7a7878"/></g>
<g transform="translate(454.0 169.0)"><path d="M-15.500 18.300 L0 30 L15.500 18.300Z" fill="#747372" stroke="#747372" stroke-width="3" stroke-linejoin="round"/><circle r="24" fill="#747372"/><circle r="20" fill="#1f3a2c"/><circle r="8" fill="#747372"/></g>
<g transform="translate(713.4 55.1)"><rect x="-14.800" y="-14.800" width="29.600" height="29.600" rx="11.500" fill="#696b6f"/><rect x="-13.300" y="-13.300" width="26.600" height="26.600" rx="10.300" fill="#26282f"/><path d="M-6.500 -6.800 Q-6.500 -7.800 -5.500 -7.800 H5.500 Q6.500 -7.800 6.500 -6.800 V4.500 H-6.500Z M-4.600 -5.800 V-2.300 H4.600 V-5.800Z" fill="#707276" fill-rule="evenodd"/><rect x="-5.600" y="4.500" width="2.600" height="2.800" fill="#707276"/><rect x="3" y="4.500" width="2.600" height="2.800" fill="#707276"/><circle cx="-3.800" cy="1.600" r="1.100" fill="#26282f"/><circle cx="3.800" cy="1.600" r="1.100" fill="#26282f"/></g>
<g transform="translate(582.0 145.8)"><rect x="-14.800" y="-14.800" width="29.600" height="29.600" rx="11.500" fill="#696b6f"/><rect x="-13.300" y="-13.300" width="26.600" height="26.600" rx="10.300" fill="#26282f"/><path d="M-6.500 -6.800 Q-6.500 -7.800 -5.500 -7.800 H5.500 Q6.500 -7.800 6.500 -6.800 V4.500 H-6.500Z M-4.600 -5.800 V-2.300 H4.600 V-5.800Z" fill="#707276" fill-rule="evenodd"/><rect x="-5.600" y="4.500" width="2.600" height="2.800" fill="#707276"/><rect x="3" y="4.500" width="2.600" height="2.800" fill="#707276"/><circle cx="-3.800" cy="1.600" r="1.100" fill="#26282f"/><circle cx="3.800" cy="1.600" r="1.100" fill="#26282f"/></g>
<g transform="translate(536.9 191.7)"><rect x="-14.800" y="-14.800" width="29.600" height="29.600" rx="11.500" fill="#696b6f"/><rect x="-13.300" y="-13.300" width="26.600" height="26.600" rx="10.300" fill="#26282f"/><path d="M-6.500 -6.800 Q-6.500 -7.800 -5.500 -7.800 H5.500 Q6.500 -7.800 6.500 -6.800 V4.500 H-6.500Z M-4.600 -5.800 V-2.300 H4.600 V-5.800Z" fill="#707276" fill-rule="evenodd"/><rect x="-5.600" y="4.500" width="2.600" height="2.800" fill="#707276"/><rect x="3" y="4.500" width="2.600" height="2.800" fill="#707276"/><circle cx="-3.800" cy="1.600" r="1.100" fill="#26282f"/><circle cx="3.800" cy="1.600" r="1.100" fill="#26282f"/></g>
<g transform="translate(418.8 304.6)"><path d="M-15.500 18.300 L0 30 L15.500 18.300Z" fill="#747372" stroke="#747372" stroke-width="3" stroke-linejoin="round"/><circle r="24" fill="#747372"/><circle r="20" fill="#23384f"/><path d="M-8.5 -3 H8.5 L10 10 H-10Z" fill="#7a828c"/><path d="M-4.500 -3 V-6 A4.500 4.500 0 0 1 4.500 -6 V-3" fill="none" stroke="#7a828c" stroke-width="2.2"/><path d="M-4 2.500 Q0 7 4 2.500" fill="none" stroke="#23384f" stroke-width="1.800"/></g>
<g transform="translate(851.0 169.0)"><path d="M-15.500 18.300 L0 30 L15.500 18.300Z" fill="#747372" stroke="#747372" stroke-width="3" stroke-linejoin="round"/><circle r="24" fill="#747372"/><circle r="20" fill="#23384f"/><path d="M-8.5 -3 H8.5 L10 10 H-10Z" fill="#7a828c"/><path d="M-4.500 -3 V-6 A4.500 4.500 0 0 1 4.500 -6 V-3" fill="none" stroke="#7a828c" stroke-width="2.2"/><path d="M-4 2.500 Q0 7 4 2.500" fill="none" stroke="#23384f" stroke-width="1.800"/></g>
<g transform="translate(1028.7 74.7)"><path d="M-15.500 18.300 L0 30 L15.500 18.300Z" fill="#747372" stroke="#747372" stroke-width="3" stroke-linejoin="round"/><circle r="24" fill="#747372"/><circle r="20" fill="#23384f"/><path d="M-11 -9 H-7 L-3.500 2.500 H7 L9.500 -5 H-5" fill="none" stroke="#7a828c" stroke-width="2.400" stroke-linejoin="round"/><path d="M-5 -5 H9.500 L7 2.500 H-3.500Z" fill="#7a828c"/><circle cx="-3" cy="7.500" r="2.200" fill="#7a828c"/><circle cx="6" cy="7.500" r="2.200" fill="#7a828c"/></g>
<g transform="translate(1363.0 156.7)"><path d="M-15.500 18.300 L0 30 L15.500 18.300Z" fill="#747372" stroke="#747372" stroke-width="3" stroke-linejoin="round"/><circle r="24" fill="#747372"/><circle r="20" fill="#3a3d42"/><g fill="#8d8e90"><rect x="-11" y="-4" width="3.500" height="12"/><rect x="7.500" y="-4" width="3.500" height="12"/><path d="M-5.500 8 V-1 A5.500 6 0 0 1 5.500 -1 V8 H2 V3 A2 2 0 0 0 -2 3 V8Z"/><rect x="-10.200" y="-7" width="2" height="3"/><rect x="8.200" y="-7" width="2" height="3"/></g></g>
<g transform="translate(1184.7 330.6)"><path d="M-15.500 18.300 L0 30 L15.500 18.300Z" fill="#747372" stroke="#747372" stroke-width="3" stroke-linejoin="round"/><circle r="24" fill="#747372"/><circle r="20" fill="#33363b"/><circle r="8" fill="#747372"/></g>
<g transform="translate(964.9 626.9)"><path d="M-15.500 18.300 L0 30 L15.500 18.300Z" fill="#747372" stroke="#747372" stroke-width="3" stroke-linejoin="round"/><circle r="24" fill="#747372"/><circle r="20" fill="#32325a"/><g fill="#9a9ab5"><path d="M-8 -9 H3 V9 H-8Z M-5.500 -6.500 V-1 H0.500 V-6.500Z" fill-rule="evenodd"/><rect x="-10" y="8" width="15" height="2.500"/><path d="M5 -7 L9.500 -3.500 V5 A2.200 2.200 0 0 1 5 5 V0 H3 V-2 H7 V5 H7.500 V-2.500 L4 -5.200Z"/></g></g>
<text aria-hidden="true" x="46.0" y="29.5" font-size="27" fill="#6e6d6c" text-anchor="end" stroke="#6e6d6c" stroke-width="3.6" stroke-linejoin="round">olot</text>
<text x="46.0" y="29.5" font-size="27" fill="#343537" text-anchor="end" stroke="#343537" stroke-width="0.4">olot</text>
<text x="33.7" y="109.0" font-size="26" fill="#5a2a2e" textLength="294.3" lengthAdjust="spacingAndGlyphs" stroke="#6e6d6c" stroke-width="3.2" stroke-linejoin="round" paint-order="stroke">Rumah Sakit Bina Sehat</text>
<path id="pRD1" d="M166 190 Q196 207 262 212.500 L420 212.500" fill="none"/>
<text font-size="24.5" font-weight="700" fill="#222428" stroke="#6e6d6c" stroke-width="3.200" paint-order="stroke" stroke-linejoin="round"><textPath href="#pRD1" textLength="249" lengthAdjust="spacingAndGlyphs">Jl. Raya Dayeuhkolot</textPath></text>
<text x="89.0" y="303.5" font-size="26" fill="#263753" textLength="298.0" lengthAdjust="spacingAndGlyphs" stroke="#6e6d6c" stroke-width="3.2" stroke-linejoin="round" paint-order="stroke">Queen Jewelry Bandung</text>
<text x="97.5" y="331.6" font-size="26" fill="#263753" textLength="291.5" lengthAdjust="spacingAndGlyphs" stroke="#6e6d6c" stroke-width="3.2" stroke-linejoin="round" paint-order="stroke">: melayani pembuatan…</text>
<text aria-hidden="true" x="466.5" y="34.5" font-size="23" fill="#6e6d6c" transform="rotate(19.2 466.5 34.5)" textLength="156.0" lengthAdjust="spacingAndGlyphs" stroke="#6e6d6c" stroke-width="3.6" stroke-linejoin="round">Jl. Lamajang 2</text>
<text x="466.5" y="34.5" font-size="23" fill="#2b2d31" transform="rotate(19.2 466.5 34.5)" textLength="156.0" lengthAdjust="spacingAndGlyphs" stroke="#2b2d31" stroke-width="0.5">Jl. Lamajang 2</text>
<text aria-hidden="true" x="660.0" y="1.0" font-size="24" fill="#6e6d6c" transform="rotate(90 660.0 1.0)" stroke="#6e6d6c" stroke-width="3.6" stroke-linejoin="round">rus</text>
<text x="660.0" y="1.0" font-size="24" fill="#2b2d31" transform="rotate(90 660.0 1.0)" stroke="#2b2d31" stroke-width="0.5">rus</text>
<text x="672.3" y="181.0" font-size="25.5" fill="#263753" textLength="148.0" lengthAdjust="spacingAndGlyphs" stroke="#6e6d6c" stroke-width="3.2" stroke-linejoin="round" paint-order="stroke">Betta oqii16</text>
<text aria-hidden="true" x="563.3" y="215.5" font-size="23.5" fill="#6e6d6c" textLength="114.0" lengthAdjust="spacingAndGlyphs" stroke="#6e6d6c" stroke-width="3.6" stroke-linejoin="round">Jl. Asrama</text>
<text x="563.3" y="215.5" font-size="23.5" fill="#303236" textLength="114.0" lengthAdjust="spacingAndGlyphs" stroke="#303236" stroke-width="0.5">Jl. Asrama</text>
<text aria-hidden="true" x="670.0" y="351.5" font-size="25" fill="#6e6d6c" transform="rotate(-56.8 670.0 351.5)" textLength="164.0" lengthAdjust="spacingAndGlyphs" stroke="#6e6d6c" stroke-width="3.6" stroke-linejoin="round">Babakan Dewi</text>
<text x="670.0" y="351.5" font-size="25" fill="#2b2d31" transform="rotate(-56.8 670.0 351.5)" textLength="164.0" lengthAdjust="spacingAndGlyphs" stroke="#2b2d31" stroke-width="0.5">Babakan Dewi</text>
<path id="pRD2" d="M418.700 385.700 C430 412 440 430 453 449.300 C466 468 480 482 483.600 503 C486 520 482 540 478 556 C474 572 466 588 458 604" fill="none"/>
<text font-size="24" font-weight="700" fill="#222428" stroke="#6e6d6c" stroke-width="3.200" paint-order="stroke" stroke-linejoin="round"><textPath href="#pRD2" textLength="236" lengthAdjust="spacingAndGlyphs">Jl. Raya Dayeuhkolot</textPath></text>
<text x="421.0" y="532.6" font-size="22" fill="#3c3e42" transform="rotate(-86.5 421.0 532.6)" textLength="100.0" lengthAdjust="spacingAndGlyphs" stroke="#6e6d6c" stroke-width="3.2" stroke-linejoin="round" paint-order="stroke">Jl. Bolero</text>
<text x="0.0" y="478.7" font-size="26" fill="#222428" font-weight="700" transform="rotate(10.6 0.0 478.7)" textLength="96.0" lengthAdjust="spacingAndGlyphs" stroke="#6e6d6c" stroke-width="3.2" stroke-linejoin="round" paint-order="stroke">ng Anu</text>
<text x="106.0" y="633.0" font-size="26" fill="#222428" font-weight="700" transform="rotate(-80 106.0 633.0)" textLength="87.0" lengthAdjust="spacingAndGlyphs" stroke="#6e6d6c" stroke-width="3.2" stroke-linejoin="round" paint-order="stroke">Kulalet</text>
<text x="218.0" y="581.6" font-size="26" fill="#222428" font-weight="700" transform="rotate(37.6 218.0 581.6)" stroke="#6e6d6c" stroke-width="3.2" stroke-linejoin="round" paint-order="stroke">Jl. Katapang</text>
<text x="998.7" y="73.5" font-size="25.5" fill="#263753" text-anchor="end" textLength="190.0" lengthAdjust="spacingAndGlyphs" stroke="#6e6d6c" stroke-width="3.2" stroke-linejoin="round" paint-order="stroke">Borma Toserba</text>
<text x="998.7" y="101.5" font-size="25.5" fill="#263753" text-anchor="end" textLength="162.7" lengthAdjust="spacingAndGlyphs" stroke="#6e6d6c" stroke-width="3.2" stroke-linejoin="round" paint-order="stroke">Bojongsoang</text>
<text aria-hidden="true" x="1076.5" y="39.2" font-size="25" fill="#6e6d6c" transform="rotate(13.3 1076.5 39.2)" textLength="90.6" lengthAdjust="spacingAndGlyphs" stroke="#6e6d6c" stroke-width="3.6" stroke-linejoin="round">Blk. H-J</text>
<text x="1076.5" y="39.2" font-size="25" fill="#26282c" transform="rotate(13.3 1076.5 39.2)" textLength="90.6" lengthAdjust="spacingAndGlyphs" stroke="#26282c" stroke-width="0.45">Blk. H-J</text>
<text aria-hidden="true" x="1354.5" y="107.6" font-size="25" fill="#6e6d6c" transform="rotate(-80 1354.5 107.6)" textLength="59.0" lengthAdjust="spacingAndGlyphs" stroke="#6e6d6c" stroke-width="3.6" stroke-linejoin="round">Bl. E1</text>
<text x="1354.5" y="107.6" font-size="25" fill="#26282c" transform="rotate(-80 1354.5 107.6)" textLength="59.0" lengthAdjust="spacingAndGlyphs" stroke="#26282c" stroke-width="0.5">Bl. E1</text>
<text aria-hidden="true" x="1407.0" y="105.1" font-size="25" fill="#6e6d6c" transform="rotate(-80 1407.0 105.1)" textLength="61.0" lengthAdjust="spacingAndGlyphs" stroke="#6e6d6c" stroke-width="3.6" stroke-linejoin="round">Blk. E</text>
<text x="1407.0" y="105.1" font-size="25" fill="#26282c" transform="rotate(-80 1407.0 105.1)" textLength="61.0" lengthAdjust="spacingAndGlyphs" stroke="#26282c" stroke-width="0.5">Blk. E</text>
<text x="1119.3" y="155.5" font-size="26" fill="#303236" textLength="211.7" lengthAdjust="spacingAndGlyphs" stroke="#6e6d6c" stroke-width="3.2" stroke-linejoin="round" paint-order="stroke">Masjid Al Mu'min</text>
<text x="1086.3" y="183.6" font-size="26" fill="#303236" textLength="247.3" lengthAdjust="spacingAndGlyphs" stroke="#6e6d6c" stroke-width="3.2" stroke-linejoin="round" paint-order="stroke">GBA 1 Bojongsoang</text>
<text aria-hidden="true" x="1296.5" y="263.0" font-size="25" fill="#6e6d6c" transform="rotate(-88 1296.5 263.0)" textLength="59.0" lengthAdjust="spacingAndGlyphs" stroke="#6e6d6c" stroke-width="3.6" stroke-linejoin="round">Bl. C1</text>
<text x="1296.5" y="263.0" font-size="25" fill="#26282c" transform="rotate(-88 1296.5 263.0)" textLength="59.0" lengthAdjust="spacingAndGlyphs" stroke="#26282c" stroke-width="0.5">Bl. C1</text>
<text aria-hidden="true" x="1287.5" y="347.0" font-size="25" fill="#6e6d6c" transform="rotate(-82 1287.5 347.0)" textLength="64.0" lengthAdjust="spacingAndGlyphs" stroke="#6e6d6c" stroke-width="3.6" stroke-linejoin="round">Bl. C1</text>
<text x="1287.5" y="347.0" font-size="25" fill="#26282c" transform="rotate(-82 1287.5 347.0)" textLength="64.0" lengthAdjust="spacingAndGlyphs" stroke="#26282c" stroke-width="0.5">Bl. C1</text>
<text aria-hidden="true" x="1340.0" y="345.0" font-size="25" fill="#6e6d6c" transform="rotate(-83 1340.0 345.0)" textLength="64.0" lengthAdjust="spacingAndGlyphs" stroke="#6e6d6c" stroke-width="3.6" stroke-linejoin="round">Blk. C</text>
<text x="1340.0" y="345.0" font-size="25" fill="#26282c" transform="rotate(-83 1340.0 345.0)" textLength="64.0" lengthAdjust="spacingAndGlyphs" stroke="#26282c" stroke-width="0.5">Blk. C</text>
<text aria-hidden="true" x="1402.0" y="259.5" font-size="25" fill="#6e6d6c" transform="rotate(5.5 1402.0 259.5)" textLength="64.0" lengthAdjust="spacingAndGlyphs" stroke="#6e6d6c" stroke-width="3.6" stroke-linejoin="round">Bl. D1</text>
<text x="1402.0" y="259.5" font-size="25" fill="#26282c" transform="rotate(5.5 1402.0 259.5)" textLength="64.0" lengthAdjust="spacingAndGlyphs" stroke="#26282c" stroke-width="0.5">Bl. D1</text>
<text aria-hidden="true" x="1476.0" y="108.0" font-size="25" fill="#6e6d6c" transform="rotate(62 1476.0 108.0)" stroke="#6e6d6c" stroke-width="3.6" stroke-linejoin="round">Bl</text>
<text x="1476.0" y="108.0" font-size="25" fill="#26282c" transform="rotate(62 1476.0 108.0)" stroke="#26282c" stroke-width="0.5">Bl</text>
<text x="1130.3" y="390.6" font-size="26.5" fill="#303236" textLength="122.5" lengthAdjust="spacingAndGlyphs" stroke="#6e6d6c" stroke-width="3.2" stroke-linejoin="round" paint-order="stroke">Ichi Bento</text>
<text x="1130.3" y="418.7" font-size="26.5" fill="#303236" textLength="200.7" lengthAdjust="spacingAndGlyphs" stroke="#6e6d6c" stroke-width="3.2" stroke-linejoin="round" paint-order="stroke">Frozen Bandung</text>
<text x="731.0" y="625.6" font-size="26.5" fill="#2c3352" textLength="203.3" lengthAdjust="spacingAndGlyphs" stroke="#6e6d6c" stroke-width="3.2" stroke-linejoin="round" paint-order="stroke">SPBU Pertamina</text>
<text x="819.0" y="653.0" font-size="26.5" fill="#2c3352" textLength="115.3" lengthAdjust="spacingAndGlyphs" stroke="#6e6d6c" stroke-width="3.2" stroke-linejoin="round" paint-order="stroke">34.40326</text>
<text x="961.2" y="584.0" font-size="26" fill="#222428" font-weight="700" transform="rotate(-79.4 961.2 584.0)" textLength="289.0" lengthAdjust="spacingAndGlyphs" stroke="#6e6d6c" stroke-width="3.2" stroke-linejoin="round" paint-order="stroke">Jl. Terusan Bojongsoang</text>
<text y="233.700" font-size="22" font-weight="700" fill="#161616"><tspan x="647.500" textLength="173.400" lengthAdjust="spacingAndGlyphs">Tempat sampah</tspan><tspan x="840.600" text-anchor="end"> 1</tspan></text>
<defs><filter id="blur" x="-50%" y="-50%" width="200%" height="200%"><feGaussianBlur stdDeviation="1.900"/></filter></defs>
<g transform="translate(742 315.500)"><path d="M1 0 C6 -8 12 -13 24 -17 C38 -21 49 -30 44 -36.500 C39 -42.500 22 -38 14 -28 C8 -20 4 -9 1 0Z" fill="#0a0a0a" opacity=".95" filter="url(#blur)"/><path d="M0 0 C-2.500 -14 -9 -24 -15 -33 C-18.500 -38.500 -19.600 -42 -19.600 -46.500 A19.600 19.600 0 0 1 19.600 -46.500 C19.600 -42 18.500 -38.500 15 -33 C9 -24 2.500 -14 0 0Z" fill="#f07f70" stroke="#000" stroke-width="1.600" stroke-linejoin="round"/><circle cx="0" cy="-46.300" r="7.300" fill="#000"/></g>
<text x="68.6" y="492.200" font-size="28" fill="#fff" fill-opacity=".55" textLength="417.400" lengthAdjust="spacingAndGlyphs">For development purposes only</text>
<text x="580.6" y="492.200" font-size="28" fill="#fff" fill-opacity=".55" textLength="417.400" lengthAdjust="spacingAndGlyphs">For development purposes only</text>
<text x="1092.4" y="492.200" font-size="28" fill="#fff" fill-opacity=".55" textLength="417.400" lengthAdjust="spacingAndGlyphs">For development purposes only</text>
<g font-size="38.5" stroke-linejoin="round"><text aria-hidden="true" x="19.800" y="629.300" stroke="#c9c9c9" stroke-width="5.500" fill="#c9c9c9" textLength="114" lengthAdjust="spacingAndGlyphs">Google</text><text x="19.800" y="629.300" textLength="114" lengthAdjust="spacingAndGlyphs" stroke-width="1.100"><tspan fill="#4e8bf1" stroke="#4e8bf1">G</tspan><tspan fill="#e0503f" stroke="#e0503f">o</tspan><tspan fill="#f4bc3c" stroke="#f4bc3c">o</tspan><tspan fill="#4e8bf1" stroke="#4e8bf1">g</tspan><tspan fill="#4fae5e" stroke="#4fae5e">l</tspan><tspan fill="#e0503f" stroke="#e0503f">e</tspan></text></g>
<g><rect x="1044.600" y="615.800" width="443.400" height="28.200" fill="#f5f5f5" fill-opacity=".68"/><rect x="1468" y="615.800" width="20" height="28.200" fill="#fff" fill-opacity=".45"/><rect x="1216.300" y="615.800" width="2" height="28.200" fill="#6a6a6a"/><rect x="1297" y="615.800" width="2" height="28.200" fill="#6a6a6a"/><g font-size="19.500" fill="#141414"><text x="1056.200" y="637.900" textLength="148.300" lengthAdjust="spacingAndGlyphs">Map data ©2025</text><text x="1229.500" y="637.900" textLength="55.100" lengthAdjust="spacingAndGlyphs">Terms</text><text x="1309.800" y="637.900" textLength="165.800" lengthAdjust="spacingAndGlyphs">Report a map error</text></g></g>
</svg>
<div class="abs" style="left:20px;top:20px;width:68px;height:128px;border:4px solid rgba(0,0,0,.22);border-radius:9px;background:#fff;background-clip:padding-box">
 <div class="abs" style="left:0;top:0;width:60px;height:60px;border-bottom:2px solid #ccc"></div>
 <div class="abs" style="left:19.7px;top:29.8px;width:22.8px;height:3.4px;background:#000"></div>
 <div class="abs" style="left:29.4px;top:20.1px;width:3.4px;height:22.8px;background:#000"></div>
 <div class="abs" style="left:19.7px;top:89.9px;width:22.8px;height:3.4px;background:#000"></div>
</div>
<div class="abs" style="left:20px;top:168px;width:68px;height:68px;border:4px solid rgba(0,0,0,.22);border-radius:9px;background:#f4f4f4;background-clip:padding-box">
 <svg class="i" style="left:10px;top:10px" width="40" height="40" viewBox="0 0 24 24"><path fill="#999" fill-rule="evenodd" d="M12 2C8.13 2 5 5.13 5 9c0 5.25 7 13 7 13s7-7.75 7-13c0-3.87-3.13-7-7-7zm0 9.5c-1.38 0-2.5-1.12-2.5-2.5s1.12-2.5 2.5-2.5 2.5 1.12 2.5 2.5-1.12 2.5-2.5 2.5z"/></svg>
</div>
<div class="abs" style="left:20px;top:256px;width:68px;height:128px;border:4px solid rgba(0,0,0,.22);border-radius:9px;background:#fff;background-clip:padding-box">
 <div class="abs" style="left:0;top:0;width:60px;height:60px;border-bottom:2px solid #ccc"></div>
 <svg class="i" style="left:11px;top:10px" width="38" height="38" viewBox="0 0 38 38"><path fill="#5b5b5b" d="M19 0l7.5 9h-5.4v7.9H29v-5.4l9 7.5-9 7.5v-5.4h-7.9V29h5.4L19 38l-7.5-9h5.4v-7.9H9v5.4L0 19l9-7.500v5.4h7.900V9h-5.400z"/></svg>
 <svg class="i" style="left:11px;top:72px" width="38" height="36" viewBox="0 0 38 36"><g fill="none" stroke="#5b5b5b" stroke-width="3.4"><path d="M24.5 2.500 L35 12 Q36.500 13.5 35 15.2 L19 32.500 L10 32.500 L2.800 25.800 Q1.500 24.300 2.800 22.800 L21.500 2.500 Q23 1.200 24.500 2.500 Z"/><path d="M14 32.500 H37"/></g><path fill="#5b5b5b" d="M24.5 2.500 L35 12 Q36.500 13.500 35 15.200 L27 23.800 L13.500 11.200 L21.500 2.500 Q23 1.200 24.500 2.500 Z"/></svg>
</div>

</div>
</section>
<section class="card" style="left:1559px;top:128px;width:420px;height:310px">
<svg class="i" style="left:23.5px;top:30.0px" width="36" height="36" viewBox="0 0 24 24"><path fill="#212121" fill-rule="evenodd" d="M6 19c0 1.1.9 2 2 2h8c1.1 0 2-.9 2-2V7H6v12zM19 4h-3.5l-1-1h-5l-1 1H5v2h14V4z"/></svg>
<h2 class="t" style="left:69.28px;top:31.26px;font-size:33px;color:#212121;-webkit-text-stroke:1.0px #212121;transform:scaleX(0.9605);font-weight:400;">Tempat Sampah 1</h2>
<svg class="i" style="left:78px;top:104px" width="104" height="182" viewBox="0 0 104 182"><path d="M30 10.5 L36 2.5 Q37.5 0.5 40 0.5 L65 0.5 Q67.5 0.5 69 2.5 L75 10.5 Z" fill="#d7f3e0"/><rect x="1.5" y="10.5" width="101" height="169.5" rx="15" ry="15" fill="#fff" stroke="#d7f3e0" stroke-width="3"/><path d="M6.8 39.8 H96.8 V165.3 Q96.8 175.3 86.8 175.3 H16.8 Q6.8 175.3 6.8 165.3 Z" fill="#d32f3e"/></svg>
<span class="t" style="left:232.75px;top:179.31px;font-size:32px;color:#212121;-webkit-text-stroke:0.8px #212121;transform:scaleX(0.9214);">84 %</span>
</section>
<section class="card" style="left:1999px;top:128px;width:420px;height:310px">
<svg class="i" style="left:23.5px;top:30.0px" width="36" height="36" viewBox="0 0 24 24"><path fill="#212121" fill-rule="evenodd" d="M6 19c0 1.1.9 2 2 2h8c1.1 0 2-.9 2-2V7H6v12zM19 4h-3.5l-1-1h-5l-1 1H5v2h14V4z"/></svg>
<h2 class="t" style="left:69.28px;top:31.26px;font-size:33px;color:#212121;-webkit-text-stroke:1.0px #212121;transform:scaleX(0.9691);font-weight:400;">Tempat Sampah 2</h2>
<svg class="i" style="left:78px;top:104px" width="104" height="182" viewBox="0 0 104 182"><path d="M30 10.5 L36 2.5 Q37.5 0.5 40 0.5 L65 0.5 Q67.5 0.5 69 2.5 L75 10.5 Z" fill="#d7f3e0"/><rect x="1.5" y="10.5" width="101" height="169.5" rx="15" ry="15" fill="#fff" stroke="#d7f3e0" stroke-width="3"/><path d="M6.8 39.8 H96.8 V165.3 Q96.8 175.3 86.8 175.3 H16.8 Q6.8 175.3 6.8 165.3 Z" fill="#82dc96"/></svg>
<span class="t" style="left:232.75px;top:179.31px;font-size:32px;color:#212121;-webkit-text-stroke:0.8px #212121;transform:scaleX(0.9214);">84 %</span>
</section>
<section class="card" style="left:2439px;top:128px;width:420px;height:310px">
<svg class="i" style="left:23.5px;top:30.0px" width="36" height="36" viewBox="0 0 24 24"><path fill="#212121" fill-rule="evenodd" d="M6 19c0 1.1.9 2 2 2h8c1.1 0 2-.9 2-2V7H6v12zM19 4h-3.5l-1-1h-5l-1 1H5v2h14V4z"/></svg>
<h2 class="t" style="left:69.28px;top:31.26px;font-size:33px;color:#212121;-webkit-text-stroke:1.0px #212121;transform:scaleX(0.9691);font-weight:400;">Tempat Sampah 3</h2>
<svg class="i" style="left:78px;top:104px" width="104" height="182" viewBox="0 0 104 182"><path d="M30 10.5 L36 2.5 Q37.5 0.5 40 0.5 L65 0.5 Q67.5 0.5 69 2.5 L75 10.5 Z" fill="#d7f3e0"/><rect x="1.5" y="10.5" width="101" height="169.5" rx="15" ry="15" fill="#fff" stroke="#d7f3e0" stroke-width="3"/><path d="M6.8 39.8 H96.8 V165.3 Q96.8 175.3 86.8 175.3 H16.8 Q6.8 175.3 6.8 165.3 Z" fill="#82dc96"/></svg>
<span class="t" style="left:232.75px;top:179.31px;font-size:32px;color:#212121;-webkit-text-stroke:0.8px #212121;transform:scaleX(0.9214);">84 %</span>
</section>
<section class="card" style="left:1559px;top:458px;width:1300px;height:970px">
<svg class="i" style="left:18.0px;top:22.0px" width="48" height="48" viewBox="0 0 24 24"><path fill="#212121" fill-rule="evenodd" d="M7.58 4.08L6.15 2.65C3.75 4.48 2.17 7.3 2.03 10.5h2c.15-2.65 1.51-4.97 3.55-6.42zm12.39 6.42h2c-.15-3.2-1.73-6.02-4.12-7.85l-1.42 1.43c2.02 1.45 3.39 3.77 3.54 6.42zM18 11c0-3.07-1.64-5.64-4.5-6.32V4c0-.83-.67-1.5-1.5-1.5s-1.5.67-1.5 1.5v.68C7.63 5.36 6 7.92 6 11v5l-2 2v1h16v-1l-2-2v-5zm-6 11c.14 0 .27-.01.4-.04.65-.14 1.18-.58 1.44-1.18.1-.24.15-.5.15-.78h-4c.01 1.1.9 2 2.01 2z"/></svg>
<h2 class="t" style="left:95.00px;top:30.48px;font-size:32.5px;color:#212121;transform:scaleX(0.9864);font-weight:400;">Alarms</h2>
<svg class="i" style="left:983.7px;top:30.0px" width="40" height="40" viewBox="0 0 24 24"><path fill="#212121" fill-rule="evenodd" d="M15.5 14h-.79l-.28-.27C15.41 12.59 16 11.11 16 9.5 16 5.91 13.09 3 9.5 3S3 5.91 3 9.5 5.91 16 9.5 16c1.61 0 3.09-.59 4.23-1.57l.27.28v.79l5 4.99L20.49 19l-4.99-5zm-6 0C7.01 14 5 11.99 5 9.5S7.01 5 9.5 5 14 7.01 14 9.5 11.99 14 9.5 14z"/></svg>
<svg class="i" style="left:1047.8px;top:30.0px" width="40" height="40" viewBox="0 0 24 24"><path fill="#212121" fill-rule="evenodd" d="M10 18h4v-2h-4v2zM3 6v2h18V6H3zm3 7h12v-2H6v2z"/></svg>
<svg class="i" style="left:1111.8px;top:30.0px" width="40" height="40" viewBox="0 0 24 24"><path fill="#212121" fill-rule="evenodd" d="M14.67 5v14H9.33V5h5.34zm1 14H21V5h-5.33v14zm-7.34 0V5H3v14h5.33z"/></svg>
<svg class="i" style="left:1175.7px;top:30.0px" width="40" height="40" viewBox="0 0 24 24"><path fill="#212121" fill-rule="evenodd" d="M6,2C4.89,2 4,2.9 4,4V20A2,2 0 0,0 6,22H18A2,2 0 0,0 20,20V8L14,2M13,3.5L18.5,9H13M8.93,12.22H16V19.29L13.88,17.17L11.05,20L8.22,17.17L11.05,14.35Z"/></svg>
<svg class="i" style="left:1239.7px;top:30.0px" width="40" height="40" viewBox="0 0 24 24"><path fill="#212121" fill-rule="evenodd" d="M7 14H5v5h5v-2H7v-3zm-2-4h2V7h3V5H5v5zm12 7h-3v2h5v-5h-2v3zM14 5v2h3v3h2V5h-5z"/></svg>
<svg class="i" style="left:18.0px;top:88.0px" width="48" height="48" viewBox="0 0 24 24"><path fill="#424242" fill-rule="evenodd" d="M11.99 2C6.47 2 2 6.48 2 12s4.47 10 9.99 10C17.52 22 22 17.52 22 12S17.52 2 11.99 2zM12 20c-4.42 0-8-3.58-8-8s3.58-8 8-8 8 3.58 8 8-3.58 8-8 8zm.5-13H11v6l5.25 3.15.75-1.23-4.5-2.67z"/></svg>
<span class="t" style="left:72.96px;top:98.14px;font-size:27px;color:#424242;transform:scaleX(1.0176);">Realtime - last day</span>
<div class="abs" style="left:54px;top:175px;width:36px;height:36px;border:4px solid #6e6e6e;border-radius:5px"></div>
<span class="t" style="left:159.13px;top:178.15px;font-size:29px;color:#757575;-webkit-text-stroke:0.8px #757575;transform:scaleX(0.9529);">Capacity</span>
<span class="t" style="left:383.09px;top:178.15px;font-size:29px;color:#757575;-webkit-text-stroke:0.8px #757575;transform:scaleX(0.9817);">Active</span>
<span class="t" style="left:562.78px;top:178.15px;font-size:29px;color:#757575;-webkit-text-stroke:0.8px #757575;transform:scaleX(1.0142);">Latitude</span>
<span class="t" style="left:777.81px;top:178.15px;font-size:29px;color:#757575;-webkit-text-stroke:0.8px #757575;transform:scaleX(0.9962);">Longitude</span>
<span class="t" style="left:1023.41px;top:178.15px;font-size:29px;color:#757575;-webkit-text-stroke:0.8px #757575;transform:scaleX(0.9836);">gas</span>
<div class="abs" style="left:8px;top:247px;width:1284px;height:2px;background:#e0e0e0"></div>
<span class="t" style="left:531.03px;top:536.06px;font-size:33px;color:#212121;transform:scaleX(0.9826);">No alarms found</span>
<div class="abs" style="left:8px;top:847.5px;width:1284px;height:2px;background:#e0e0e0"></div>
<span class="t" style="left:282.82px;top:895.83px;font-size:25px;color:#757575;transform:scaleX(1.0403);">Items per page:</span>
<div class="abs" style="left:479px;top:865.5px;width:167px;height:81.5px;border:2px solid #8c8c8c;border-radius:9px"></div>
<span class="t" style="left:509.85px;top:895.83px;font-size:25px;color:#757575;transform:scaleX(1.0462);">10</span>
<svg class="i" style="left:594px;top:904px" width="21" height="10.5" viewBox="0 0 20 10"><path d="M0 0H20L10 10Z" fill="#666"/></svg>
<span class="t" style="left:717.64px;top:893.83px;font-size:25px;color:#757575;transform:scaleX(1.0553);">1 – 0 of 0</span>
<svg class="i" style="left:916.0px;top:882.0px" width="48" height="48" viewBox="0 0 24 24"><path fill="#c9c9c9" fill-rule="evenodd" d="M18.41 16.59L13.82 12l4.59-4.59L17 6l-6 6 6 6zM6 6h2v12H6z"/></svg>
<svg class="i" style="left:1011.5px;top:882.0px" width="48" height="48" viewBox="0 0 24 24"><path fill="#c9c9c9" fill-rule="evenodd" d="M15.41 7.41L14 6l-6 6 6 6 1.41-1.41L10.83 12z"/></svg>
<svg class="i" style="left:1109.0px;top:882.0px" width="48" height="48" viewBox="0 0 24 24"><path fill="#c9c9c9" fill-rule="evenodd" d="M10 6L8.59 7.41 13.17 12l-4.58 4.59L10 18l6-6z"/></svg>
<svg class="i" style="left:1204.5px;top:882.0px" width="48" height="48" viewBox="0 0 24 24"><path fill="#c9c9c9" fill-rule="evenodd" d="M5.59 7.41L10.18 12l-4.59 4.59L7 18l6-6-6-6zM16 6h2v12h-2z"/></svg>
</section>
<section class="card" style="left:19px;top:898px;width:1520px;height:530px;background:#eeeeee">
<div class="abs" style="left:24px;top:24px;width:1472px;height:482px;background:#fafafa"></div>
<svg class="i" style="left:48.0px;top:40.0px" width="48" height="48" viewBox="0 0 24 24"><path fill="#212121" fill-rule="evenodd" d="M12 2C6.48 2 2 6.48 2 12s4.48 10 10 10 10-4.48 10-10S17.52 2 12 2zm1 15h-2v-6h2v6zm0-8h-2V7h2v2z"/></svg>
<h2 class="t" style="left:104.42px;top:47.26px;font-size:33px;color:#212121;-webkit-text-stroke:0.8px #212121;transform:scaleX(0.9694);font-weight:400;">Carbon monoxide</h2>
<span class="t" style="left:105.00px;top:90.53px;font-size:25px;color:#9e9e9e;transform:scaleX(0.9467);">${gas}</span>
<span class="t" style="left:573.89px;top:156.66px;font-size:110px;color:#c62f3e;-webkit-text-stroke:3.0px #c62f3e;transform:scaleX(1.0180);">413</span>
<span class="t" style="left:775.67px;top:201.89px;font-size:58px;color:#c62f3e;-webkit-text-stroke:1.5px #c62f3e;transform:scaleX(1.0357);">mg/m³</span>
<span class="t" style="left:1393.77px;top:184.75px;font-size:31px;color:#9e9e9e;-webkit-text-stroke:0.8px #9e9e9e;transform:scaleX(1.0217);">N/A</span>
<span class="t" style="left:1454.94px;top:191.53px;font-size:23px;color:#9e9e9e;-webkit-text-stroke:0.6px #9e9e9e;transform:scaleX(0.8155);">%</span>
<span class="t" style="left:1361.61px;top:217.43px;font-size:25px;color:#9e9e9e;transform:scaleX(1.0450);">N/A</span>
<span class="t" style="left:1408.95px;top:220.82px;font-size:21px;color:#9e9e9e;transform:scaleX(1.0513);">mg/m³</span>
<span class="t" style="left:48.77px;top:307.37px;font-size:22px;color:#9e9e9e;transform:scaleX(0.7273);">1</span>
<span class="t" style="left:49.00px;top:417.97px;font-size:22px;color:#9e9e9e;transform:scaleX(0.8333);">0</span>
<div class="abs" style="left:76px;top:318.79999999999995px;width:11.6px;height:11.6px;border-left:3.4px solid #9a9a9a;border-top:3.4px solid #9a9a9a"></div>
<div class="abs" style="left:76px;top:417.4000000000001px;width:11.6px;height:11.6px;border-left:3.4px solid #9a9a9a;border-bottom:3.4px solid #9a9a9a"></div>
<div class="abs" style="left:1460.4px;top:318.9000000000001px;width:11.6px;height:11.6px;border-right:3.4px solid #9a9a9a;border-top:3.4px solid #9a9a9a"></div>
<div class="abs" style="left:1460.4px;top:418.4000000000001px;width:11.6px;height:11.6px;border-right:3.4px solid #9a9a9a;border-bottom:3.4px solid #9a9a9a"></div>
<span class="t" style="left:47.06px;top:452.63px;font-size:25px;color:#9e9e9e;transform:scaleX(0.9695);">Last update 11h ago</span>
</section>
<footer>
<span class="t" style="left:2400.49px;top:1431.83px;font-size:25px;color:#212121;transform:scaleX(0.9056);">Powered by</span>
<a class="t" style="left:2527.94px;top:1431.83px;font-size:25px;color:#3d6cc0;-webkit-text-stroke:0.9px #3d6cc0;transform:scaleX(0.9808);">ThingsBoard v.4.0.1.3PAAS</a>
</footer>
<script>(function(){var w=window.innerWidth;if(w&&Math.abs(w-2878)>2){document.body.style.zoom=w/2878;}})();</script>
</body></html>
